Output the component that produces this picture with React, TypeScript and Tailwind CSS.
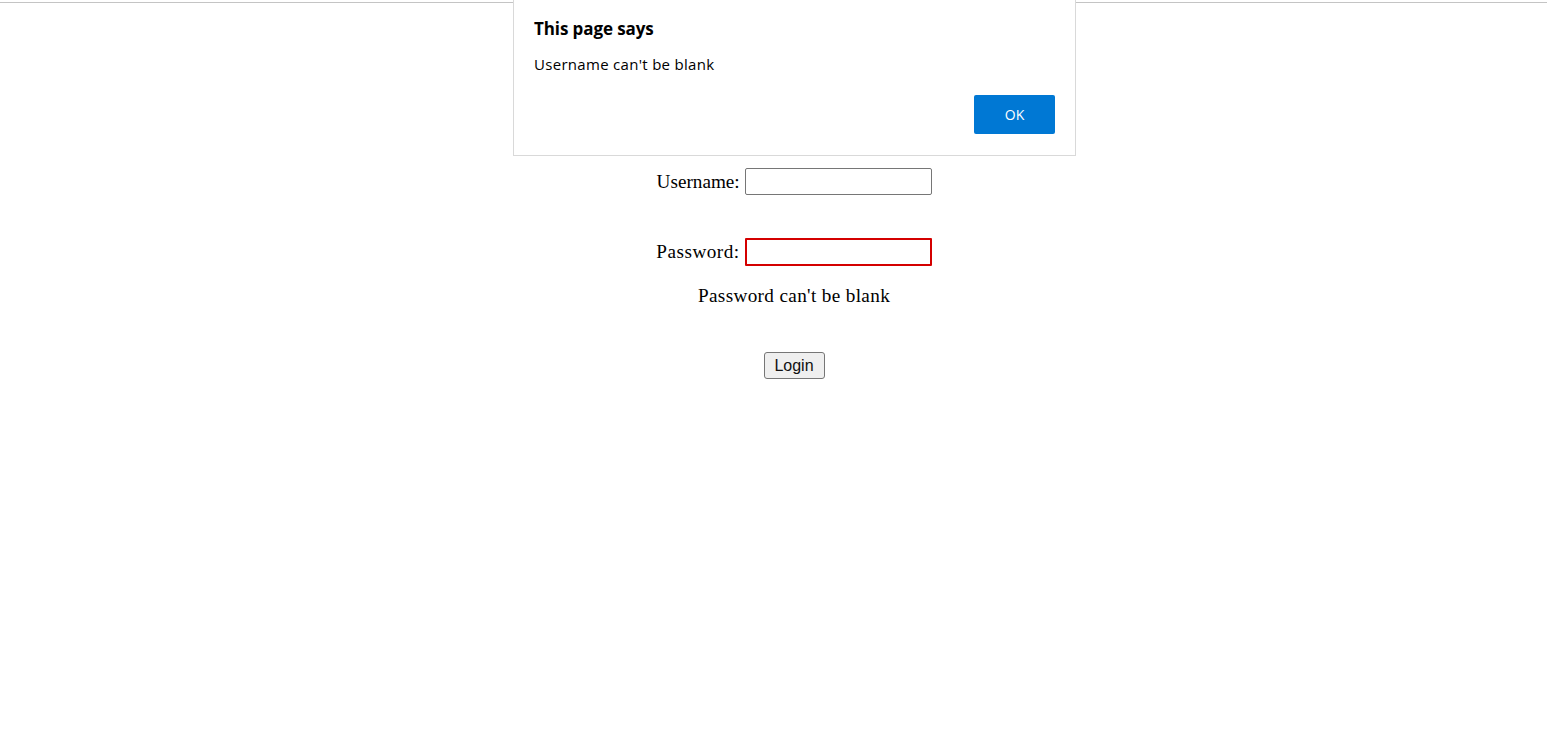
import React from 'react';

function AlertDialog() {
  return (
    <div className="absolute left-[513px] top-0 w-[563px] h-[156px] border border-t-0 border-[#d9d9d9] bg-white px-5 pt-[17px] font-['Open_Sans',sans-serif] text-black">
      <div className="text-[17px] font-bold leading-[24px] tracking-[-0.1px]">This page says</div>
      <div className="mt-[13px] text-[15px] leading-[20px] tracking-[0.3px]">Username can't be blank</div>
      <div className="mt-[21px] flex justify-end">
        <button className="h-[39px] w-[81px] rounded-[2px] bg-[#0078d4] text-[14px] text-white">OK</button>
      </div>
    </div>
  );
}

export default function App() {
  return (
    <div className="relative min-h-screen bg-white font-['Liberation_Serif',serif] text-[19.2px] text-black">
      <div className="pt-[2px]">
        <div className="h-px bg-[#c4c4c4]" />
      </div>

      <form className="flex flex-col items-center pl-[41px] pt-[165px]" onSubmit={(e) => e.preventDefault()}>
        <div className="grid grid-cols-[auto_187px] items-center gap-x-[5px] gap-y-[43px]">
          <label className="text-right leading-[22px]">Username:</label>
          <input className="h-[27px] w-[187px] rounded-[2px] border border-[#767676] bg-white" />
          <label className="text-right leading-[22px] tracking-[0.5px]">Password:</label>
          <input type="password" className="h-[28px] w-[187px] rounded-[1px] border-2 border-[#d40000] bg-white" />
        </div>

        <p className="mt-[19px] leading-[22px] tracking-[0.35px]">Password can't be blank</p>

        <button className="mt-[45px] h-[27px] w-[61px] rounded-[3px] border border-[#767676] bg-[#efefef] font-['Liberation_Sans',sans-serif] text-[16px] text-[#111]">
          Login
        </button>
      </form>

      <AlertDialog />
    </div>
  );
}
